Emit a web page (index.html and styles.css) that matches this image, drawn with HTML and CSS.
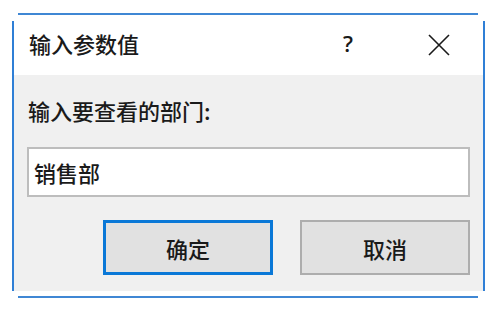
FILE: index.html
```html
<!DOCTYPE html>
<html lang="zh-CN">
<head>
    <meta charset="UTF-8">
    <title>输入参数值</title>
    <link rel="stylesheet" href="styles.css">
</head>
<body>

<div class="dialog">
    <div class="rule rule-top"></div>
    <div class="window">
        <div class="titlebar">
            <span class="title">输入参数值</span>
            <span class="help">?</span>
            <span class="close">
                <svg width="22" height="22" viewBox="0 0 22 22">
                    <path d="M1 1 L21 21 M21 1 L1 21" stroke="#1a1a1a" stroke-width="1.6" fill="none"/>
                </svg>
            </span>
        </div>
        <div class="content">
            <label class="prompt">输入要查看的部门:</label>
            <input class="field" type="text" value="销售部">
            <div class="buttons">
                <button class="btn btn-default">确定</button>
                <button class="btn">取消</button>
            </div>
        </div>
    </div>
    <div class="rule rule-bottom"></div>
</div>

</body>
</html>
```

FILE: styles.css
```css
* {
    margin: 0;
    padding: 0;
    box-sizing: border-box;
}

body {
    background: #ffffff;
    font-family: "Noto Sans CJK SC", "Noto Sans", sans-serif;
    font-weight: 500;
    color: #1a1a1a;
    width: 502px;
    height: 309px;
    overflow: hidden;
}

.rule {
    height: 2px;
    background: #3f87d4;
    margin: 0 24px 0 18px;
}

.rule-top {
    margin-top: 13px;
}

.rule-bottom {
    margin-top: 5px;
}

.window {
    margin: 6px 17px 0 12px;
    border-left: 2px solid #2f7fd6;
    border-right: 2px solid #2f7fd6;
    height: 270px;
    display: flex;
    flex-direction: column;
}

.titlebar {
    height: 54px;
    background: #ffffff;
    display: flex;
    align-items: center;
    padding: 0 0 10px 15px;
}

.title {
    font-size: 22px;
    flex: 1;
}

.help {
    font-family: "Open Sans", sans-serif;
    font-size: 22px;
    font-weight: 600;
    width: 20px;
    margin-right: 65px;
}

.close {
    display: flex;
    margin-right: 33px;
    padding-top: 4px;
}

.content {
    flex: 1;
    background: #f0f0f0;
    padding: 20px 13px 0 13px;
}

.prompt {
    display: block;
    font-size: 22px;
    line-height: 30px;
    padding-left: 1px;
}

.field {
    display: block;
    width: 100%;
    height: 50px;
    margin-top: 22px;
    border: 2px solid #bdbdbd;
    background: #ffffff;
    font-family: inherit;
    font-weight: 500;
    font-size: 22px;
    color: #1a1a1a;
    padding: 0 5px;
    outline: none;
}

.buttons {
    display: flex;
    justify-content: flex-end;
    gap: 27px;
    margin-top: 23px;
}

.btn {
    width: 170px;
    height: 55px;
    background: #e1e1e1;
    border: 2px solid #adadad;
    font-family: inherit;
    font-weight: 500;
    font-size: 22px;
    color: #1a1a1a;
}

.btn-default {
    border: 3px solid #0a78d7;
}
```
